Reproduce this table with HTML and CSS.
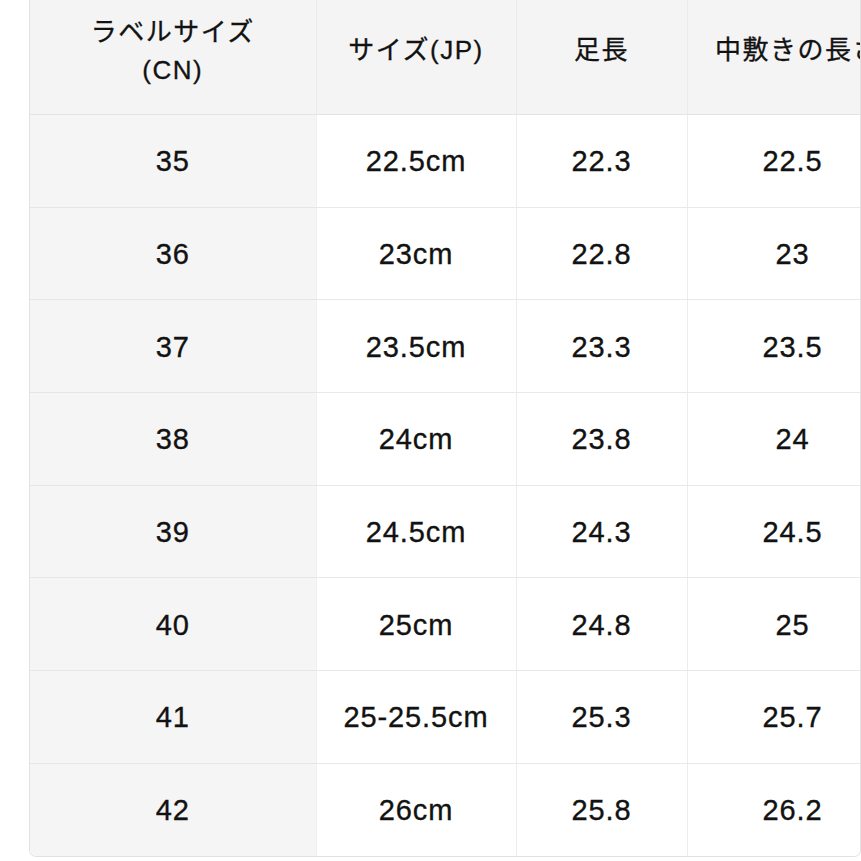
FILE: index.html
```html
<!DOCTYPE html>
<html lang="ja">
<head>
<meta charset="utf-8">
<link rel="stylesheet" href="styles.css">
</head>
<body>
<div class="frame">
  <table class="sizes">
    <colgroup>
      <col class="c1"><col class="c2"><col class="c3"><col class="c4">
    </colgroup>
    <thead>
      <tr>
        <th class="lead">ラベルサイズ<br>(CN)</th>
        <th>サイズ(JP)</th>
        <th>足長</th>
        <th class="wide">中敷きの長さ</th>
      </tr>
    </thead>
    <tbody>
      <tr><td class="lead">35</td><td>22.5cm</td><td>22.3</td><td>22.5</td></tr>
      <tr><td class="lead">36</td><td>23cm</td><td>22.8</td><td>23</td></tr>
      <tr><td class="lead">37</td><td>23.5cm</td><td>23.3</td><td>23.5</td></tr>
      <tr><td class="lead">38</td><td>24cm</td><td>23.8</td><td>24</td></tr>
      <tr><td class="lead">39</td><td>24.5cm</td><td>24.3</td><td>24.5</td></tr>
      <tr><td class="lead">40</td><td>25cm</td><td>24.8</td><td>25</td></tr>
      <tr><td class="lead">41</td><td>25-25.5cm</td><td>25.3</td><td>25.7</td></tr>
      <tr><td class="lead">42</td><td>26cm</td><td>25.8</td><td>26.2</td></tr>
    </tbody>
  </table>
</div>
</body>
</html>
```

FILE: styles.css
```css
html, body {
  margin: 0;
  padding: 0;
  background: #ffffff;
}

body {
  font-family: "Liberation Sans", "Noto Sans CJK JP", sans-serif;
  color: #121212;
}

.frame {
  margin-left: 29px;
  width: 832px;
  height: 857px;
  box-sizing: border-box;
  border: 1px solid #e2e2e2;
  border-top: none;
  border-radius: 0 0 7px 7px;
  overflow: hidden;
}

.sizes {
  table-layout: fixed;
  border-collapse: collapse;
  width: 868px;
}

.c1 { width: 286px; }
.c2 { width: 200px; }
.c3 { width: 171px; }
.c4 { width: 211px; }

.sizes th {
  height: 100px;
  padding: 0 0 14px 0;
  background: #f4f4f4;
  font-weight: normal;
  font-size: 26px;
  letter-spacing: 1.5px;
  line-height: 38px;
  text-align: center;
  vertical-align: middle;
  border-bottom: 1px solid #e4e4e4;
  border-right: 1px solid #eaeaea;
  white-space: nowrap;
  -webkit-text-stroke: 0.3px #121212;
}

.sizes th.lead {
  vertical-align: top;
  padding: 13px 0 0 0;
  height: 101px;
}

.sizes th.wide {
  padding-left: 10px;
}

.sizes td {
  height: 89.7px;
  padding: 2px 0 0 0;
  font-size: 29px;
  letter-spacing: 0.9px;
  text-align: center;
  vertical-align: middle;
  border-bottom: 1px solid #e8e8e8;
  border-right: 1px solid #ececec;
  background: #ffffff;
  -webkit-text-stroke: 0.35px #121212;
}

.sizes td.lead {
  background: #f5f5f5;
  border-right: 1px solid #f0f0f0;
  border-bottom-color: #e6e6e6;
}

.sizes tbody tr:last-child td {
  border-bottom: none;
}
```
